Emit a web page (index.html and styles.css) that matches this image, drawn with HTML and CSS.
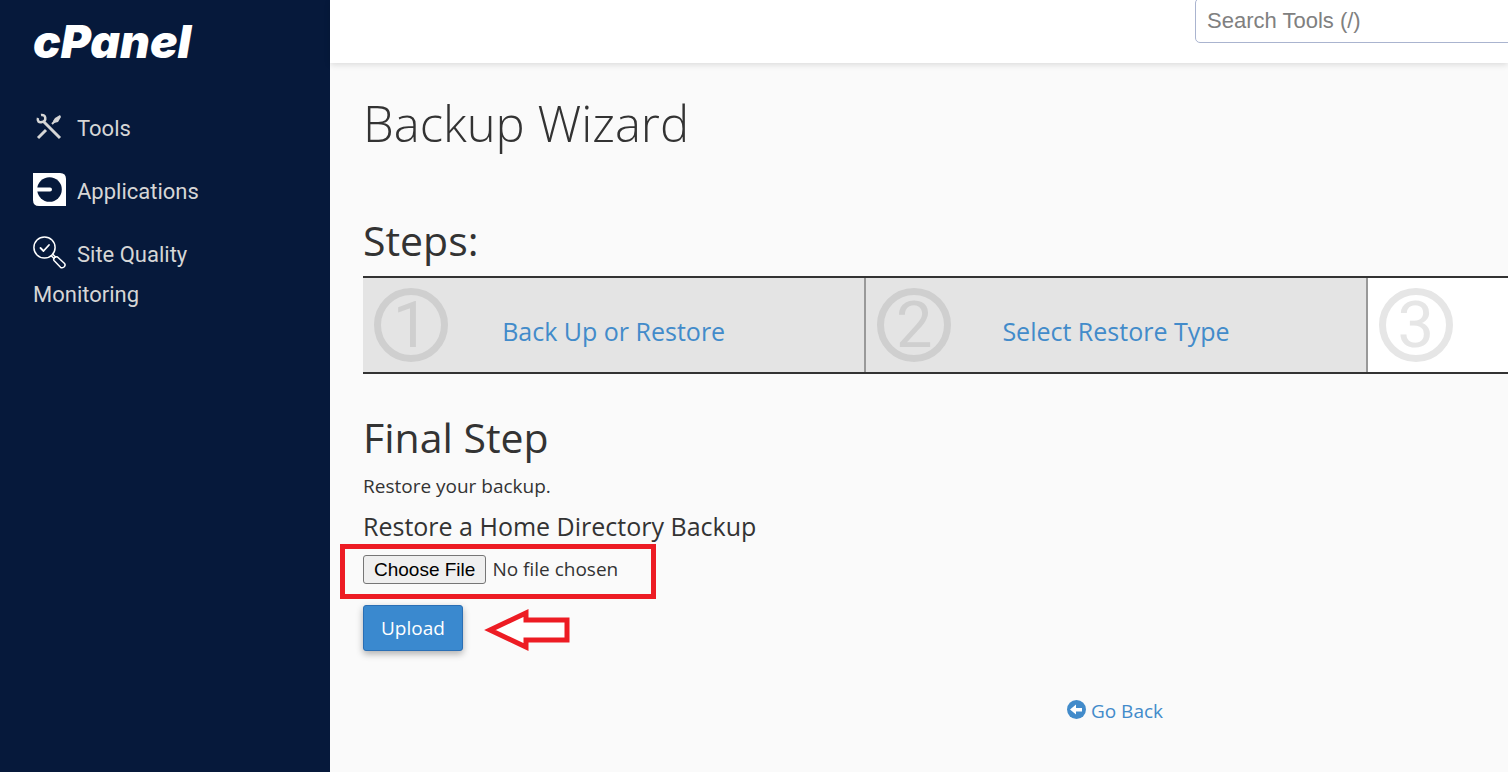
FILE: index.html
```
<!DOCTYPE html>
<html lang="en">

<head>
    <meta charset="UTF-8">
    <meta name="viewport" content="width=device-width, initial-scale=1.0">
    <title>cPanel - Backup Wizard</title>
    <link rel="stylesheet" href="styles.css">
</head>

<body>

    <!-- Sidebar -->
    <aside class="sidebar">
        <a class="logo" href="#">cPanel</a>
        <nav class="side-nav">
            <a href="#">
                <svg class="nav-icon" viewBox="0 0 33 33" aria-hidden="true">
                    <g fill="none" stroke="#d6d6d6" stroke-width="3">
                        <path d="M10 11 L27 28" />
                        <path d="M5 28 L13 20" />
                        <path d="M19 14 L23 10" stroke-width="2" />
                        <path d="M8 5 C13 4 14 11 9 12 C6 13 4 11 5 8" stroke-width="2.5" />
                    </g>
                    <path d="M27 5 L28 7 L25 12 L21 13 L20 11 L22 8 Z" fill="#d6d6d6" />
                </svg>Tools</a>
            <a href="#">
                <svg class="nav-icon" viewBox="0 0 33 33" aria-hidden="true">
                    <path d="M0 0 H27 Q33 0 33 6 V33 H6 Q0 33 0 27 Z" fill="#fff" />
                    <circle cx="16.5" cy="16.5" r="12.3" fill="#06193b" />
                    <path d="M3 16.5 H17" stroke="#fff" stroke-width="4" stroke-linecap="round" />
                </svg>Applications</a>
            <a href="#">
                <svg class="nav-icon" viewBox="0 0 33 33" aria-hidden="true">
                    <g fill="none" stroke="#fff" stroke-width="1.5" stroke-linecap="round" stroke-linejoin="round">
                        <circle cx="11.5" cy="11.5" r="10.6" />
                        <path d="M7.500 12 L10.500 15 L16 9" stroke-width="1.8" />
                        <path d="M18.500 20 L21 22.500 M20 18.500 L22.500 21" />
                        <path d="M21 24.500 L27.500 31.300 Q29 32.500 31 31 Q33 29 31.300 27.300 L24.500 21 Q23 20.300 21.600 21.500 Q20 23 21 24.500 Z" />
                    </g>
                </svg>Site Quality Monitoring</a>
        </nav>
    </aside>

    <!-- Page -->
    <div class="page">
        <header class="topbar">
            <input class="search" type="search" placeholder="Search Tools (/)" aria-label="Search Tools">
        </header>

        <main class="content">
            <h1>Backup Wizard</h1>

            <h2>Steps:</h2>
            <ol class="steps">
                <li class="done">
                    <span class="number">1</span>
                    <a href="#">Back Up or Restore</a>
                </li>
                <li class="done">
                    <span class="number">2</span>
                    <a href="#">Select Restore Type</a>
                </li>
                <li>
                    <span class="number">3</span>
                </li>
            </ol>

            <h2>Final Step</h2>
            <p>Restore your backup.</p>

            <form>
                <h3><label for="backupFile">Restore a Home Directory Backup</label></h3>
                <div class="file-row">
                    <input type="file" id="backupFile">
                    <span class="highlight"></span>
                </div>
                <div class="upload-row">
                    <button type="button" class="upload">Upload</button>
                    <svg class="arrow" viewBox="0 0 87 46" aria-hidden="true">
                        <path d="M7 25 L43 8 V15 H84 V35 H43 V42 Z" fill="#fff" stroke="#ed1c24" stroke-width="5" />
                    </svg>
                </div>
            </form>

            <div class="back">
                <a href="#">
                    <svg viewBox="0 0 19 19" aria-hidden="true">
                        <circle cx="9.5" cy="9.5" r="9.5" fill="#428bca" />
                        <path d="M3 9.500 L9 4.500 V8 H15 V11.500 H9 V14.500 Z" fill="#fff" />
                    </svg>Go Back</a>
            </div>
        </main>
    </div>

</body>

</html>
```
FILE: styles.css
```
* {
    box-sizing: border-box;
}

body {
    margin: 0;
    display: flex;
    min-height: 100vh;
    overflow: hidden;
    background-color: #fafafa;
    color: #333;
    font-family: "Open Sans", sans-serif;
    font-size: 19px;
}

a {
    color: #428bca;
    text-decoration: none;
}

a:hover {
    text-decoration: underline;
}

/* Sidebar */
.sidebar {
    flex: 0 0 330px;
    padding: 12px 66px 0 33px;
    background-color: #06193b;
}

.logo {
    display: block;
    color: #fff;
    font-family: Inter, sans-serif;
    font-size: 46px;
    font-style: italic;
    font-weight: 900;
    line-height: 58px;
}

.side-nav {
    display: flex;
    flex-direction: column;
    gap: 23px;
    margin-top: 39px;
}

.side-nav a {
    color: #d6d6d6;
    font-family: Roboto, sans-serif;
    font-size: 22px;
    line-height: 40px;
}

.nav-icon {
    width: 33px;
    height: 33px;
    margin-right: 11px;
    vertical-align: -7px;
}

/* Top bar */
.page {
    flex: 1;
    min-width: 0;
}

.topbar {
    display: flex;
    justify-content: flex-end;
    height: 63px;
    background-color: #fff;
    box-shadow: 0 2px 6px rgba(0, 0, 0, 0.12);
}

.search {
    width: 340px;
    height: 45px;
    margin: -2px -27px 0 0;
    padding: 0 11px;
    border: 1px solid #aab4cf;
    border-radius: 5px;
    background-color: #fff;
    font-family: "Liberation Sans", Arial, sans-serif;
    font-size: 22px;
}

.search::placeholder {
    color: #808080;
}

/* Content */
.content {
    padding: 24px 33px;
}

h1,
h2,
h3,
p {
    margin: 0;
    font-weight: 400;
}

h1 {
    margin-bottom: 51px;
    font-size: 49px;
    font-weight: 300;
    line-height: 72px;
}

h2 {
    font-size: 41px;
    line-height: 60px;
}

.steps {
    display: flex;
    min-width: 1504px;
    margin: 6px 0 33px;
    padding: 0;
    border-top: 2px solid #333;
    border-bottom: 2px solid #333;
    list-style: none;
}

.steps li {
    display: flex;
    flex: 1 1 33%;
    height: 94px;
    padding: 10px 11px;
    background-color: #fff;
}

.steps li + li {
    border-left: 2px solid #999;
}

.steps .done {
    background-color: #e4e4e4;
}

.number {
    flex: 0 0 74px;
    height: 74px;
    border: 7px solid #e6e6e6;
    border-radius: 50%;
    color: #e6e6e6;
    font-family: Roboto, sans-serif;
    font-size: 65px;
    line-height: 60px;
    text-align: center;
}

.done .number {
    border-color: #cfcfcf;
    color: #cfcfcf;
}

.steps a {
    flex: 1;
    padding-right: 74px;
    font-size: 25px;
    line-height: 86px;
    text-align: center;
}

p {
    margin-top: 2px;
    line-height: 34px;
}

h3 {
    font-size: 25px;
    line-height: 46px;
}

.file-row {
    position: relative;
    width: 270px;
    padding-top: 6px;
}

/* Red frame drawn around the file picker */
.highlight {
    position: absolute;
    top: -5px;
    left: -23px;
    width: 316px;
    height: 55px;
    border: 5px solid #ed1c24;
    pointer-events: none;
}

input[type="file"] {
    display: block;
    width: 270px;
    font-family: "Open Sans", sans-serif;
    font-size: 19px;
    color: #333;
}

input[type="file"]::file-selector-button {
    height: 29px;
    margin-right: 6px;
    padding: 0 10px;
    border: 1px solid #767676;
    border-radius: 3px;
    background-color: #efefef;
    color: #000;
    font-family: "Liberation Sans", Arial, sans-serif;
    font-size: 19px;
}

.upload-row {
    display: flex;
    align-items: center;
    gap: 20px;
    margin-top: 21px;
}

.upload {
    height: 46px;
    padding: 0 17px;
    border: 1px solid #2a6fb5;
    border-radius: 3px;
    background-color: #3a89cf;
    box-shadow: 0 3px 7px rgba(0, 0, 0, 0.3);
    color: #fff;
    font-family: "Open Sans", sans-serif;
    font-size: 19px;
    cursor: pointer;
}

.upload:hover {
    background-color: #2a6fb5;
}

.arrow {
    width: 87px;
    height: 46px;
}

.back {
    min-width: 1504px;
    margin-top: 43px;
    line-height: 34px;
    text-align: center;
}

.back svg {
    width: 19px;
    height: 19px;
    margin-right: 5px;
    vertical-align: -1px;
}
```
